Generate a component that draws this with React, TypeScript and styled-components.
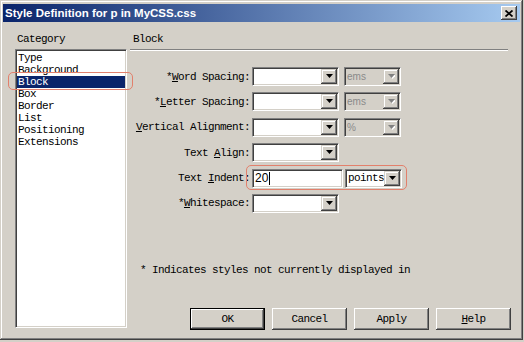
import styled, { createGlobalStyle } from 'styled-components';

const GlobalStyle = createGlobalStyle`
  body {
    margin: 0;
    background: #d4d0c8;
  }
`;

const MONO = `"Liberation Mono", "DejaVu Sans Mono", monospace`;

const Window = styled.div`
  box-sizing: border-box;
  width: 523px;
  height: 340px;
  padding: 4px 3px 3px 3px;
  background: #d4d0c8;
  box-shadow: inset -1px -1px #404040, inset 1px 1px #d4d0c8,
    inset -2px -2px #808080, inset 2px 2px #ffffff;
  display: flex;
  flex-direction: column;
  font-family: ${MONO};
  font-size: 11px;
  letter-spacing: -0.6px;
  color: #000;
`;

const TitleBar = styled.div`
  height: 18px;
  display: flex;
  align-items: center;
  justify-content: space-between;
  padding: 0 3px 0 2px;
  background: linear-gradient(to right, #0a246a, #a6caf0);
`;

const Title = styled.span`
  color: #fff;
  font-family: "Liberation Sans", Arial, sans-serif;
  font-weight: bold;
  font-size: 11.5px;
  letter-spacing: 0;
`;

const CloseButton = styled.div`
  box-sizing: border-box;
  width: 16px;
  height: 14px;
  background: #d4d0c8;
  box-shadow: inset -1px -1px #404040, inset 1px 1px #ffffff,
    inset -2px -2px #808080;
  display: flex;
  align-items: center;
  justify-content: center;
`;

const Body = styled.div`
  display: flex;
  padding: 11px 0 0 12px;
`;

const LeftPane = styled.div`
  width: 112px;
  display: flex;
  flex-direction: column;
  position: relative;
`;

const PaneLabel = styled.div`
  height: 16px;
  line-height: 13px;
  padding-left: 2px;
`;

const ListBox = styled.div`
  box-sizing: border-box;
  height: 279px;
  background: #fff;
  border: 1px solid;
  border-color: #808080 #fff #fff #808080;
  box-shadow: inset 1px 1px #404040, inset -1px -1px #d4d0c8;
  padding: 2px 1px;
`;

const ListItem = styled.div<{ $selected?: boolean }>`
  position: relative;
  height: 12px;
  line-height: 12px;
  padding-left: 1px;
  background: ${p => (p.$selected ? '#0a246a' : 'transparent')};
  color: ${p => (p.$selected ? '#fff' : '#000')};
`;

const Annotation = styled.div<{ $left: number; $top: number; $w: number; $h: number }>`
  position: absolute;
  box-sizing: border-box;
  left: ${p => p.$left}px;
  top: ${p => p.$top}px;
  width: ${p => p.$w}px;
  height: ${p => p.$h}px;
  border: 1.5px solid #e2806c;
  border-radius: 5px;
  pointer-events: none;
`;

const RightPane = styled.div`
  width: 381px;
  margin-left: 3px;
  display: flex;
  flex-direction: column;
`;

const Heading = styled.div`
  height: 16px;
  line-height: 13px;
  padding-left: 3px;
`;

const Separator = styled.div`
  margin-right: 3px;
  border-top: 1px solid #808080;
  border-bottom: 1px solid #fff;
`;

const Form = styled.div`
  margin-top: 16px;
  display: flex;
  flex-direction: column;
  gap: 6.4px;
`;

const Row = styled.div`
  position: relative;
  display: flex;
  align-items: center;
  height: 19px;
`;

const Label = styled.div`
  width: 120px;
  text-align: right;
  white-space: nowrap;
  margin-right: 2px;
`;

const Controls = styled.div<{ $gap: number }>`
  display: flex;
  gap: ${p => p.$gap}px;
`;

const Field = styled.div<{ $width: number; $disabled?: boolean }>`
  box-sizing: border-box;
  width: ${p => p.$width}px;
  height: 19px;
  border: 1px solid;
  border-color: #808080 #fff #fff #808080;
  box-shadow: inset 1px 1px #404040, inset -1px -1px #d4d0c8;
  background: ${p => (p.$disabled ? '#d4d0c8' : '#fff')};
  padding: 1px 1px 1px 2px;
  display: flex;
  align-items: center;
`;

const FieldText = styled.span<{ $disabled?: boolean; $sans?: boolean }>`
  flex: 1;
  color: ${p => (p.$disabled ? '#8a8a8a' : '#000')};
  font-family: ${p => (p.$sans ? '"Liberation Sans", Arial, sans-serif' : MONO)};
  font-size: ${p => (p.$sans ? '12px' : '11px')};
  letter-spacing: ${p => (p.$sans ? '0' : '-0.6px')};
  ${p => (p.$disabled ? 'font-family: "Liberation Sans", Arial, sans-serif; font-size: 10px; letter-spacing: 0;' : '')}
  display: flex;
  align-items: center;
`;

const Caret = styled.span`
  width: 1px;
  height: 13px;
  background: #000;
  margin-left: 1px;
`;

const ArrowButton = styled.div`
  box-sizing: border-box;
  width: 16px;
  height: 15px;
  background: #d4d0c8;
  box-shadow: inset -1px -1px #404040, inset 1px 1px #d4d0c8,
    inset -2px -2px #808080, inset 2px 2px #ffffff;
  display: flex;
  align-items: center;
  justify-content: center;
`;

const Arrow = ({ disabled }: { disabled?: boolean }) => (
  <svg width="7" height="5" viewBox="0 0 7 5">
    {disabled && <path d="M1 1h7L4.5 5z" fill="#fff" />}
    <path d="M0 0h7L3.5 4z" fill={disabled ? '#808080' : '#000'} />
  </svg>
);

const Key = styled.span`
  text-decoration: underline;
`;

const Footnote = styled.div`
  margin-top: 50px;
  padding-left: 10px;
  height: 14px;
  line-height: 14px;
`;

const ButtonRow = styled.div`
  margin-top: 31px;
  display: flex;
  justify-content: flex-end;
  gap: 7px;
`;

const Button = styled.div<{ $default?: boolean }>`
  box-sizing: border-box;
  width: 75px;
  height: 22px;
  background: #d4d0c8;
  display: flex;
  align-items: center;
  justify-content: center;
  box-shadow: ${p =>
    p.$default
      ? 'inset 0 0 0 1px #000, inset -2px -2px #404040, inset 2px 2px #ffffff, inset -3px -3px #808080'
      : 'inset -1px -1px #404040, inset 1px 1px #ffffff, inset -2px -2px #808080'};
`;

const categories = ['Type', 'Background', 'Block', 'Box', 'Border', 'List', 'Positioning', 'Extensions'];

const Combo = ({ width, text, disabled }: { width: number; text?: string; disabled?: boolean }) => (
  <Field $width={width} $disabled={disabled}>
    <FieldText $disabled={disabled}>{text}</FieldText>
    <ArrowButton>
      <Arrow disabled={disabled} />
    </ArrowButton>
  </Field>
);

export default function App() {
  return (
    <>
      <GlobalStyle />
      <Window>
        <TitleBar>
          <Title>Style Definition for p in MyCSS.css</Title>
          <CloseButton>
            <svg width="8" height="7" viewBox="0 0 8 7">
              <path d="M0.5 0.5L7.5 6.5M7.5 0.5L0.5 6.5" stroke="#000" strokeWidth="1.8" />
            </svg>
          </CloseButton>
        </TitleBar>
        <Body>
          <LeftPane>
            <PaneLabel>Category</PaneLabel>
            <ListBox>
              {categories.map(c => (
                <ListItem key={c} $selected={c === 'Block'}>
                  {c}
                  {c === 'Block' && <Annotation $left={-9} $top={-4} $w={125} $h={18} />}
                </ListItem>
              ))}
            </ListBox>
          </LeftPane>
          <RightPane>
            <Heading>Block</Heading>
            <Separator />
            <Form>
              <Row>
                <Label>*<Key>W</Key>ord Spacing:</Label>
                <Controls $gap={5}>
                  <Combo width={87} />
                  <Combo width={57} text="ems" disabled />
                </Controls>
              </Row>
              <Row>
                <Label>*<Key>L</Key>etter Spacing:</Label>
                <Controls $gap={5}>
                  <Combo width={87} />
                  <Combo width={57} text="ems" disabled />
                </Controls>
              </Row>
              <Row>
                <Label><Key>V</Key>ertical Alignment:</Label>
                <Controls $gap={5}>
                  <Combo width={87} />
                  <Combo width={57} text="%" disabled />
                </Controls>
              </Row>
              <Row>
                <Label>Text <Key>A</Key>lign:</Label>
                <Controls $gap={5}>
                  <Combo width={87} />
                </Controls>
              </Row>
              <Row>
                <Label>Text <Key>I</Key>ndent:</Label>
                <Controls $gap={2}>
                  <Field $width={91}>
                    <FieldText $sans>
                      20
                      <Caret />
                    </FieldText>
                  </Field>
                  <Combo width={57} text="points" />
                </Controls>
                <Annotation $left={116} $top={-4} $w={161} $h={25} />
              </Row>
              <Row>
                <Label>*<Key>W</Key>hitespace:</Label>
                <Controls $gap={5}>
                  <Combo width={87} />
                </Controls>
              </Row>
            </Form>
            <Footnote>* Indicates styles not currently displayed in</Footnote>
            <ButtonRow>
              <Button $default>OK</Button>
              <Button>Cancel</Button>
              <Button>Apply</Button>
              <Button>
                <span>
                  <Key>H</Key>elp
                </span>
              </Button>
            </ButtonRow>
          </RightPane>
        </Body>
      </Window>
    </>
  );
}
